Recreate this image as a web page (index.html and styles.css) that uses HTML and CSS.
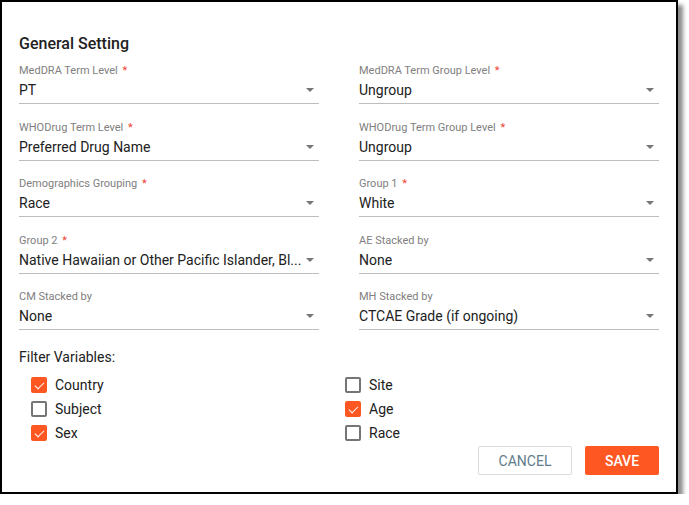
FILE: index.html
```html
<!DOCTYPE html>
<html lang="en">
<head>
    <meta charset="UTF-8">
    <meta name="viewport" content="width=device-width, initial-scale=1.0">
    <title>General Setting</title>
    <link rel="stylesheet" href="styles.css">
</head>
<body>
    <div class="dialog">
        <h2 class="title">General Setting</h2>

        <div class="fields">
            <div class="field">
                <label class="field-label">MedDRA Term Level <span class="req">*</span></label>
                <div class="select"><span class="select-value">PT</span><span class="arrow"></span></div>
            </div>
            <div class="field">
                <label class="field-label">MedDRA Term Group Level <span class="req">*</span></label>
                <div class="select"><span class="select-value">Ungroup</span><span class="arrow"></span></div>
            </div>
            <div class="field">
                <label class="field-label">WHODrug Term Level <span class="req">*</span></label>
                <div class="select"><span class="select-value">Preferred Drug Name</span><span class="arrow"></span></div>
            </div>
            <div class="field">
                <label class="field-label">WHODrug Term Group Level <span class="req">*</span></label>
                <div class="select"><span class="select-value">Ungroup</span><span class="arrow"></span></div>
            </div>
            <div class="field">
                <label class="field-label">Demographics Grouping <span class="req">*</span></label>
                <div class="select"><span class="select-value">Race</span><span class="arrow"></span></div>
            </div>
            <div class="field">
                <label class="field-label">Group 1 <span class="req">*</span></label>
                <div class="select"><span class="select-value">White</span><span class="arrow"></span></div>
            </div>
            <div class="field">
                <label class="field-label">Group 2 <span class="req">*</span></label>
                <div class="select"><span class="select-value">Native Hawaiian or Other Pacific Islander, Bl...</span><span class="arrow"></span></div>
            </div>
            <div class="field">
                <label class="field-label">AE Stacked by</label>
                <div class="select"><span class="select-value">None</span><span class="arrow"></span></div>
            </div>
            <div class="field">
                <label class="field-label">CM Stacked by</label>
                <div class="select"><span class="select-value">None</span><span class="arrow"></span></div>
            </div>
            <div class="field">
                <label class="field-label">MH Stacked by</label>
                <div class="select"><span class="select-value">CTCAE Grade (if ongoing)</span><span class="arrow"></span></div>
            </div>
        </div>

        <p class="filter-title">Filter Variables:</p>
        <div class="checks">
            <label class="check"><span class="box checked"></span>Country</label>
            <label class="check"><span class="box"></span>Site</label>
            <label class="check"><span class="box"></span>Subject</label>
            <label class="check"><span class="box checked"></span>Age</label>
            <label class="check"><span class="box checked"></span>Sex</label>
            <label class="check"><span class="box"></span>Race</label>
        </div>

        <div class="actions">
            <button class="btn btn-cancel">Cancel</button>
            <button class="btn btn-save">Save</button>
        </div>
    </div>
</body>
</html>
```

FILE: styles.css
```css
:root {
    --orange: #ff5722;
    --text: #212121;
    --label: #757575;
    --line: #bdbdbd;
    --main-font: Roboto, "Liberation Sans", Arial, sans-serif;
}

* {
    box-sizing: border-box;
    font-family: var(--main-font);
}

body {
    margin: 0;
    background: #fff;
}

.dialog {
    width: 678px;
    height: 494px;
    border: 2px solid #000;
    box-shadow: 5px 5px 4px rgba(0, 0, 0, 0.45);
    padding: 32px 17px 0;
    background: #fff;
}

.title {
    margin: 0;
    font-size: 16px;
    line-height: 20px;
    font-weight: 500;
    color: var(--text);
}

.fields {
    display: grid;
    grid-template-columns: 300px 300px;
    column-gap: 40px;
    row-gap: 16.5px;
    margin-top: 10px;
}

.field-label {
    display: block;
    font-size: 11px;
    line-height: 14px;
    color: #808080;
    margin-bottom: 2px;
}
.req {
    color: #f44336;
    margin-left: 2px;
}

.select {
    display: flex;
    align-items: center;
    height: 24px;
    padding-bottom: 3px;
    border-bottom: 1px solid var(--line);
}
.select-value {
    flex: 1;
    font-size: 14px;
    line-height: 20px;
    color: var(--text);
    white-space: nowrap;
}
.arrow {
    width: 0;
    height: 0;
    border-left: 4px solid transparent;
    border-right: 4px solid transparent;
    border-top: 4px solid var(--label);
    margin: 0 5px 0 4px;
}

.filter-title {
    margin: 17px 0 6px;
    font-size: 14px;
    line-height: 20px;
    color: var(--text);
}

.checks {
    display: grid;
    grid-template-columns: 314px auto;
    padding-left: 12px;
}
.check {
    display: flex;
    align-items: center;
    height: 24px;
    font-size: 14px;
    color: var(--text);
}
.box {
    width: 16px;
    height: 16px;
    border: 2px solid var(--label);
    border-radius: 2px;
    margin-right: 8px;
    position: relative;
}
.box.checked {
    background: var(--orange);
    border-color: var(--orange);
}
.box.checked::after {
    content: "";
    position: absolute;
    left: 3.5px;
    top: 0.5px;
    width: 4px;
    height: 8px;
    border-right: 1.5px solid #fff;
    border-bottom: 1.5px solid #fff;
    transform: rotate(45deg);
}

.actions {
    display: flex;
    justify-content: flex-end;
    gap: 13px;
    width: 640px;
    margin-top: 1px;
}
.btn {
    height: 29px;
    border-radius: 2px;
    font-size: 14px;
    text-transform: uppercase;
    cursor: pointer;
}
.btn-cancel {
    width: 94px;
    background: #fff;
    border: 1px solid #dcdcdc;
    color: #607d8b;
}
.btn-save {
    width: 74px;
    background: var(--orange);
    border: none;
    color: #fff;
    font-weight: 500;
}
```
